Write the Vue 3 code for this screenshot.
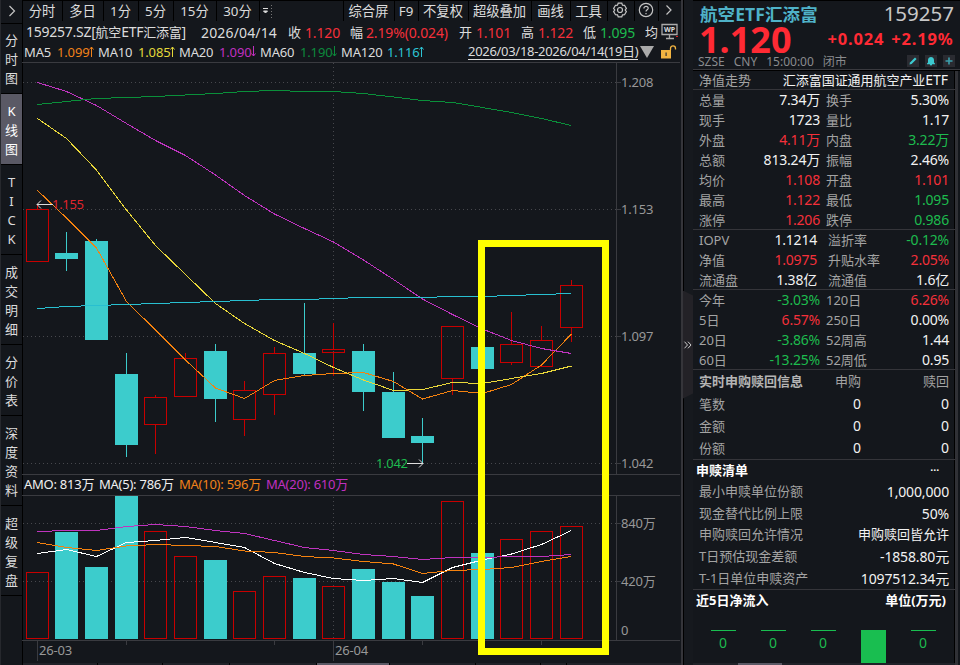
<template>
  <div class="terminal">
    <!-- Left navigation -->
    <aside class="side">
      <div class="side-toggle">
        <svg width="8" height="12" viewBox="0 0 8 12"><path d="M1.5 1l5 5-5 5" /></svg>
      </div>
      <div v-for="tab in sideTabs" :key="tab" class="side-tab" :class="{ active: tab === 'K线图' }">
        <span v-for="(ch, i) in tab" :key="i">{{ ch }}</span>
      </div>
      <div class="side-rest"></div>
    </aside>

    <!-- Chart area -->
    <main class="main">
      <div class="toolbar">
        <div v-for="item in periods" :key="item" class="tool">{{ item }}</div>
        <div class="tool more">
          <svg width="12" height="14" viewBox="0 0 12 14">
            <path d="M1 4.500h5M1.500 7h4L3.500 9z" fill="#ddd" stroke="#ddd" />
            <path d="M9.500 1v13" stroke="#777" stroke-dasharray="1 2" />
          </svg>
        </div>
        <div v-for="item in tools" :key="item" class="tool">{{ item }}</div>
        <div class="tool icon">
          <svg width="16" height="16" viewBox="0 0 16 16">
            <path d="M6.200 1.200h3.600l.7 1.900 2 .2 1.900 3.100-1.200 1.600 1.200 1.600-1.900 3.100-2 .2-.7 1.900H6.200l-.7-1.900-2-.2-1.900-3.100L2.800 8 1.600 6.400l1.900-3.100 2-.2z" />
            <circle cx="8" cy="8" r="2.500" />
          </svg>
        </div>
        <div class="tool icon">
          <svg width="16" height="16" viewBox="0 0 16 16">
            <circle cx="8" cy="8" r="6.700" />
            <path d="M5.900 6.400c0-2.700 4.300-2.600 4.300-.1 0 1.500-2.200 1.600-2.200 3.300M8 10.900v1.300" />
          </svg>
        </div>
        <div class="tool icon">
          <svg width="8" height="12" viewBox="0 0 8 12"><path d="M1.500 1.500L6 6l-4.500 4.500" /></svg>
        </div>
      </div>

      <div class="quote-row">
        <span>159257.SZ[<i>航空</i>ETF<i>汇添富</i>]</span>
        <span class="date">2026/04/14</span>
        <template v-for="q in quotes" :key="q.label">
          <i>{{ q.label }}</i>
          <span :class="q.tone">{{ q.value }}</span>
        </template>
        <i>均</i>
        <svg class="wp" width="18" height="17" viewBox="0 0 18 17">
          <path d="M1 1.500h15v10H1zM5 15.500h8M8.500 12v3" fill="none" stroke="#aaa" stroke-width="1.300" />
          <text x="8.500" y="9" text-anchor="middle">WP</text>
          <path d="M15 13.500h2" stroke="#e02020" />
        </svg>
      </div>

      <div class="ma-row">
        <template v-for="m in averages" :key="m.name">
          <span>{{ m.name }}</span>
          <span :class="m.tone">{{ m.value }}<svg width="5" height="11" viewBox="0 0 5 11"><path :d="m.up ? 'M2.500 11V1M.5 3.500l2-2.500 2 2.500' : 'M2.500 0v10M.5 7.500l2 2.500 2-2.500'" /></svg></span>
        </template>
        <span class="range">2026/03/18-2026/04/14(19<i>日</i>)</span>
        <svg class="tri" width="14" height="12" viewBox="0 0 14 12"><path d="M0 0h14L7 12z" fill="#aaa" /></svg>
        <svg class="lock" width="16" height="14" viewBox="0 0 16 14">
          <path d="M0 5h10v8.500H0z" fill="#f2b441" />
          <path d="M9.500 5V3.500c0-3.500 5-3.500 5 0v1" fill="none" stroke="#f2b441" stroke-width="1.300" />
          <path d="M4.500 7.500h1.200v3.500H4.500z" fill="#333" />
        </svg>
      </div>

      <div class="chart-wrap">
        <svg class="chart" width="658" height="600" viewBox="22 62 658 600">
          <g class="frame">
            <path d="M22 62.500H680M22 474.500H680M22 495.500H680M22 640.500H680" />
            <path d="M616.500 63V474M616.500 496V640M617 82.500h4M617 209.500h4M617 336.500h4M617 463.500h4M617 523.500h4M617 581.500h4" />
            <path d="M37.500 641V661M333.500 641V661M126.500 641v4M274.500 641v4M422.500 641v4M541.500 641v4" />
          </g>
          <path class="dots" d="M23 82.500H616M23 209.500H616M23 336.500H616M23 463.500H616M23 523.500H616M23 581.500H616M333.500 63V474M333.500 497V640" />

          <g v-for="(c, i) in candles" :key="i" :class="c[0] ? 'rise' : 'fall'">
            <path :d="`M${xs[i]} ${c[3]}V${c[1]}M${xs[i]} ${c[2]}V${c[4]}`" />
            <rect :x="xs[i] - 11" :y="c[1] + 0.5" width="22" :height="c[2] - c[1] - 1" />
            <rect :x="xs[i] - 11" :y="c[5] + 0.5" width="22" :height="638 - c[5]" />
          </g>

          <polyline v-for="(l, i) in lines" :key="i" class="ma" :class="l.tone" :points="toPoints(l.ys)" />

          <g class="mark">
            <path d="M37 204.500H53M41 200.500l-4 4 4 4M407 463.500h16M419 459.500l4 4-4 4" />
            <text class="c-red" x="52" y="209">1.155</text>
            <text class="c-green" x="376" y="468">1.042</text>
          </g>
          <g class="axis">
            <text v-for="a in axis" :key="a[0]" :x="a[1]" :y="a[2]">{{ a[0] }}</text>
          </g>
          <rect class="highlight" x="481.500" y="243.500" width="124" height="408" />
        </svg>
        <div class="amo-row">
          <span>AMO: 813<i>万</i></span>
          <span>MA(5): 786<i>万</i></span>
          <span class="c-orange">MA(10): 596<i>万</i></span>
          <span class="c-magenta">MA(20): 610<i>万</i></span>
        </div>
      </div>
      <div class="strip"><b v-for="(w, i) in [74, 64, 66, 86, 72, 85, 64, 25, 115]" :key="i" :class="{ on: i === 4 }" :style="{ width: w + 'px' }"></b></div>
    </main>

    <!-- Collapse gutter -->
    <div class="gutter">
      <div class="handle">
        <svg width="9" height="8" viewBox="0 0 9 8"><path d="M1.500 .7l3 3.300-3 3.300M5 .7l3 3.300-3 3.300" /></svg>
      </div>
    </div>

    <!-- Quote panel -->
    <section class="panel">
      <header class="head">
        <div class="head-name">
          <strong>航空ETF汇添富</strong>
          <span>159257</span>
        </div>
        <div class="head-price">
          <strong>1.120</strong>
          <b>+0.024</b>
          <b>+2.19%</b>
        </div>
        <div class="head-meta">
          <span>SZSE</span><span>CNY</span><span>15:00:00</span><i>闭市</i>
          <div class="badges">
            <svg width="12" height="12" viewBox="0 0 12 12"><path d="M2.500 9.500l.5-2L8 2.500 9.600 4l-5 5z" fill="#3ccad0" /></svg>
            <svg width="12" height="12" viewBox="0 0 12 12"><path d="M2 9.200V8.500l1-1V5c0-4 6-4 6 0v2.500l1 1v.7H7.200a1.200 1.200 0 01-2.400 0z" fill="#3ccad0" /></svg>
            <svg width="12" height="12" viewBox="0 0 12 12"><path d="M6 2.500v7M2.500 6h7" stroke="#3ba0ad" stroke-width="1.600" /></svg>
          </div>
        </div>
      </header>

      <div class="body">
        <div class="row trend">
          <i>净值走势</i>
          <span class="white"><i>汇添富国证通用航空产业</i>ETF</span>
        </div>
        <div v-for="(group, g) in groups" :key="g" class="group" :class="'group-' + g">
          <div v-for="r in group" :key="r[0]" class="pair">
            <i>{{ r[0] }}</i>
            <span :class="r[2]">{{ r[1] }}</span>
            <i>{{ r[3] }}</i>
            <span :class="r[5]">{{ r[4] }}</span>
          </div>
        </div>

        <div class="group live">
          <div class="live-row live-head"><b>实时申购赎回信息</b><i>申购</i><i>赎回</i></div>
          <div v-for="n in ['笔数', '金额', '份额']" :key="n" class="live-row">
            <i>{{ n }}</i><span>0</span><span>0</span>
          </div>
        </div>

        <div class="group list">
          <div class="list-head"><b>申赎清单</b><em>···</em></div>
          <div v-for="r in listing" :key="r[0]" class="row">
            <i>{{ r[0] }}</i>
            <span class="white" :class="{ cjk: r[2] }">{{ r[1] }}</span>
          </div>
        </div>

        <div class="flow-head"><b>近5日净流入</b><b>单位(万元)</b></div>
        <div class="flow">
          <div v-for="(f, i) in flows" :key="i" class="flow-bar">
            <div :style="{ height: f + 'px' }"></div>
            <span v-if="f === 1">0</span>
          </div>
        </div>
        <div class="panel-strip"><b></b></div>
      </div>
    </section>
  </div>
</template>

<script setup>
const sideTabs = ['分时图', 'K线图', 'TICK', '成交明细', '分价表', '深度资料', '超级复盘']
const periods = ['分时', '多日', '1分', '5分', '15分', '30分']
const tools = ['综合屏', 'F9', '不复权', '超级叠加', '画线', '工具']

const quotes = [
  { label: '收', value: '1.120', tone: 'c-red' },
  { label: '幅', value: '2.19%(0.024)', tone: 'c-red' },
  { label: '开', value: '1.101', tone: 'c-red' },
  { label: '高', value: '1.122', tone: 'c-red' },
  { label: '低', value: '1.095', tone: 'c-green' }
]

const averages = [
  { name: 'MA5', value: '1.099', tone: 'c-orange', up: true },
  { name: 'MA10', value: '1.085', tone: 'c-yellow', up: true },
  { name: 'MA20', value: '1.090', tone: 'c-magenta', up: false },
  { name: 'MA60', value: '1.190', tone: 'c-dkgreen', up: false },
  { name: 'MA120', value: '1.116', tone: 'c-cyan', up: true }
]

// Candle centres
const xs = [37.5, 66.5, 96.5, 126.5, 155.5, 185.5, 215.5, 244.5, 274.5, 304.5, 333.5, 363.5, 393.5, 422.5, 452.5, 482.5, 511.5, 541.5, 571.5]

// [rise, body top, body bottom, high, low, volume top]
const candles = [
  [1, 209, 262, 205, 262, 572],
  [0, 253, 259, 232, 271, 532],
  [0, 241, 340, 239, 340, 567],
  [0, 374, 445, 353, 457, 496],
  [1, 397, 425, 395, 454, 531],
  [1, 358, 397, 353, 397, 556],
  [0, 351, 399, 344, 422, 560],
  [1, 390, 420, 381, 436, 591],
  [1, 353, 395, 347, 415, 576],
  [0, 353, 374, 303, 375, 578],
  [1, 349, 353, 323, 376, 586],
  [0, 351, 392, 344, 411, 569],
  [0, 392, 438, 372, 438, 582],
  [0, 436, 443, 418, 464, 596],
  [1, 326, 379, 326, 395, 501],
  [0, 347, 369, 347, 369, 553],
  [1, 344, 363, 312, 365, 539],
  [1, 340, 367, 326, 367, 531],
  [1, 285, 328, 280, 342, 526]
]

const lines = [
  { tone: 's-orange', ys: [190.5, 218, 248, 301.5, 330, 360, 388, 398.5, 380.5, 375.5, 373.5, 372.5, 381.5, 399, 390.5, 393.5, 384.5, 365, 334] },
  { tone: 's-yellow', ys: [118.5, 138.5, 170, 210, 245.5, 274.5, 303.5, 323.5, 340.5, 353.5, 367.5, 380, 390.5, 389.5, 382.5, 383.5, 378.5, 373.5, 366] },
  { tone: 's-magenta', ys: [82.5, 91.5, 105.5, 123.5, 140.5, 155.5, 175, 195.5, 214, 228.5, 242, 260, 279.5, 299, 314.5, 329, 340.5, 348.5, 353.5] },
  { tone: 's-green', ys: [104.5, 101.5, 98.5, 97.5, 96.5, 95, 93.5, 91.5, 90.5, 91.5, 91.5, 93.5, 97, 100.5, 102.5, 107.5, 112.5, 118.5, 125.5] },
  { tone: 's-cyan', ys: [308.5, 306.5, 305.5, 304.5, 303.5, 302.5, 301.5, 300.5, 299.5, 299.5, 298.5, 297.5, 297.5, 297.5, 296.5, 296.5, 295.5, 294.5, 293.5] },
  { tone: 's-white', ys: [553.5, 549.5, 556.5, 542.5, 540.5, 537.5, 542.5, 547.5, 563.5, 572.5, 578.5, 580.5, 578.5, 582.5, 567.5, 560, 554, 544.5, 530.5] },
  { tone: 's-orange', ys: [542.5, 547.5, 550.5, 546, 544.5, 545.5, 546.5, 551, 552.5, 556.5, 558, 561.5, 564, 573.5, 570.5, 569.5, 567.5, 561.5, 556.5] },
  { tone: 's-magenta', ys: [531.5, 530.5, 530.5, 526.5, 524.5, 526.5, 530.5, 533.5, 540.5, 547.5, 550.5, 554.5, 556.5, 559.5, 557.5, 557.5, 556.5, 556.5, 554.5] }
]

const axis = [
  ['1.208', 621, 87],
  ['1.153', 621, 214],
  ['1.097', 621, 341],
  ['1.042', 621, 468],
  ['840万', 621, 528],
  ['420万', 621, 586],
  ['0', 621, 635],
  ['26-03', 39, 655],
  ['26-04', 335, 655]
]

const groups = [
  [
    ['总量', '7.34万', 'white', '换手', '5.30%', 'white'],
    ['现手', '1723', 'white', '量比', '1.17', 'white'],
    ['外盘', '4.11万', 'c-red', '内盘', '3.22万', 'c-green'],
    ['总额', '813.24万', 'white', '振幅', '2.46%', 'white'],
    ['均价', '1.108', 'c-red', '开盘', '1.101', 'c-red'],
    ['最高', '1.122', 'c-red', '最低', '1.095', 'c-green'],
    ['涨停', '1.206', 'c-red', '跌停', '0.986', 'c-green']
  ],
  [
    ['IOPV', '1.1214', 'white', '溢折率', '-0.12%', 'c-green'],
    ['净值', '1.0975', 'c-red', '升贴水率', '2.05%', 'c-red'],
    ['流通盘', '1.38亿', 'white', '流通值', '1.6亿', 'white']
  ],
  [
    ['今年', '-3.03%', 'c-green', '120日', '6.26%', 'c-red'],
    ['5日', '6.57%', 'c-red', '250日', '0.00%', 'white'],
    ['20日', '-3.86%', 'c-green', '52周高', '1.44', 'white'],
    ['60日', '-13.25%', 'c-green', '52周低', '0.95', 'white']
  ]
]

const listing = [
  ['最小申赎单位份额', '1,000,000'],
  ['现金替代比例上限', '50%'],
  ['申购赎回允许情况', '申购赎回皆允许', true],
  ['T日预估现金差额', '-1858.80元'],
  ['T-1日单位申赎资产', '1097512.34元']
]

const flows = [1, 1, 1, 33, 1]

function toPoints(ys) {
  return ys.map((y, i) => `${xs[i]},${y}`).join(' ')
}
</script>

<style>
body {
  background: #000;
  overflow: hidden;
}
</style>

<style scoped>
.terminal {
  display: flex;
  width: 960px;
  height: 665px;
  overflow: hidden;
  background: #14171c;
  color: #dcdcdc;
  font-family: "Noto Sans", "Noto Sans CJK SC", sans-serif;
  font-size: 14px;
  line-height: 20px;
  white-space: nowrap;
}

.terminal * {
  box-sizing: border-box;
}

i,
em {
  font-style: normal;
}

i {
  font-size: 13px;
}

svg {
  display: block;
  flex: none;
}

.white { color: #f2f2f2; }
.c-red { color: #f5303a; fill: #e0242c; }
.c-green { color: #1dbb4e; fill: #1dbb4e; }
.c-orange { color: #f0821a; }
.c-yellow { color: #e3d83a; }
.c-magenta { color: #c030c0; }
.c-dkgreen { color: #0c8a3c; }
.c-cyan { color: #2cc4d4; }

/* Left navigation */
.side {
  display: flex;
  flex-direction: column;
  width: 22px;
  border-left: 1px solid #26282d;
}

.side-toggle {
  display: flex;
  align-items: center;
  justify-content: center;
  height: 24px;
  padding-bottom: 2px;
  border-bottom: 1px solid #000;
}

.side-toggle path,
.tool.icon path,
.tool.icon circle {
  fill: none;
  stroke: #c4c4c4;
  stroke-width: 1.2;
}

.side-tab {
  display: flex;
  flex-direction: column;
  align-items: center;
  padding: 7px 0 5px;
  border-bottom: 1px solid #000;
  font-size: 13px;
  line-height: 19px;
}

.side-tab:nth-child(n + 3) {
  padding: 8px 0 5px;
}

.side-tab.active {
  background: #5a5965;
  color: #fff;
}

/* Toolbar */
.main {
  display: flex;
  flex-direction: column;
  width: 659px;
  border-left: 1px solid #000;
}

.toolbar {
  display: grid;
  grid-template-columns: 40px 41px 35px 35px 43px 43px 84px 51px 24px 50px 63px 39px 37px 27px 24px 22px;
  height: 21px;
  border-top: 1px solid #000;
}

.tool {
  display: flex;
  align-items: center;
  justify-content: center;
  padding-right: 1px;
  border-right: 1px solid #000;
  font-size: 13.3px;
  line-height: 20px;
}

.tool.more {
  justify-content: flex-start;
  padding-left: 2px;
}

.tool.icon {
  padding-right: 2px;
  padding-bottom: 2px;
}

.tool:last-child {
  border-right: 0;
}

.quote-row {
  display: grid;
  grid-template-columns: 175px 87px 17px 45px 16px 93px 17px 45px 17px 45px 17px 45px 16px 18px;
  align-items: center;
  height: 21px;
  padding-left: 3px;
  line-height: 21px;
}

.quote-row > span {
  letter-spacing: -0.25px;
}

.quote-row > .date {
  letter-spacing: 0.15px;
}

.quote-row > [class^="c-"] {
  letter-spacing: -0.15px;
}

.wp {
  margin-top: -2px;
}

.wp text {
  fill: #ddd;
  font-size: 7px;
  font-weight: 700;
}

.ma-row {
  display: grid;
  grid-template-columns: 33px 41px 40px 41px 40px 41px 40px 41px 46px 81px 172px 21px 16px;
  align-items: center;
  height: 20px;
  padding-left: 1px;
  font-size: 13px;
  line-height: 20px;
}

.ma-row span svg {
  display: inline-block;
  fill: none;
  stroke: currentColor;
}

.ma-row > span {
  letter-spacing: -0.15px;
}

.ma-row > .range {
  justify-self: start;
  line-height: 15px;
  letter-spacing: -0.3px;
  border-bottom: 1px solid #dcdcdc;
}

/* Chart */
.chart-wrap {
  position: relative;
  height: 601px;
}

.chart {
  margin-left: -1px;
}

.frame path {
  fill: none;
  stroke: #3a3b40;
}

.dots {
  fill: none;
  stroke: #47484d;
  stroke-dasharray: 1 3;
  shape-rendering: crispEdges;
}

.rise path,
.rise rect {
  fill: none;
  stroke: #c80000;
}

.fall path {
  stroke: #3ccccc;
}

.fall rect {
  fill: #3ccccc;
  stroke: #3ccccc;
}

.ma {
  fill: none;
  stroke-width: 1;
  shape-rendering: crispEdges;
}

.s-orange { stroke: #f5820f; }
.s-yellow { stroke: #ead83a; }
.s-magenta { stroke: #bf34bf; }
.s-green { stroke: #0a8f3a; }
.s-cyan { stroke: #28bfd0; }
.s-white { stroke: #fff; }

.mark path {
  fill: none;
  stroke: #ddd;
}

.mark text {
  font-size: 13px;
  letter-spacing: -0.3px;
}

.axis text {
  fill: #989898;
  font-size: 13px;
  letter-spacing: -0.2px;
}

.highlight {
  fill: none;
  stroke: #ff0;
  stroke-width: 7;
}

.amo-row {
  position: absolute;
  top: 412px;
  left: 1px;
  display: grid;
  grid-template-columns: 75px 80px 87px 90px;
  height: 20px;
  color: #f0f0f0;
  font-size: 13px;
  letter-spacing: -0.25px;
}

.strip {
  display: flex;
  gap: 1px;
  height: 2px;
  background: #000;
}

.strip b {
  flex: none;
  background: #202228;
}

.strip b.on {
  background: #5a5965;
}

/* Collapse gutter */
.gutter {
  display: flex;
  align-items: center;
  width: 12px;
  padding-top: 24px;
  background: linear-gradient(90deg, #35353a 2px, #000 2px, #000 3px, #16191e 3px);
}

.handle {
  display: flex;
  align-items: center;
  width: 10px;
  height: 108px;
  margin-left: 2px;
  background: #232227;
  clip-path: polygon(0 0, 100% 5px, 100% 103px, 0 100%);
}

.handle path {
  fill: none;
  stroke: #ccc;
}

/* Quote panel */
.panel {
  width: 267px;
  border-top: 1px solid #000;
}

.head {
  height: 70px;
  padding: 2px 6px 0 7px;
  border-bottom: 1px solid #000;
  box-shadow: inset 0 -1px #3a3a3f;
}

.head-name {
  display: flex;
  justify-content: space-between;
  height: 22px;
  line-height: 22px;
}

.head-name strong {
  color: #4fb2c8;
  font-size: 17.5px;
  letter-spacing: 0.1px;
}

.head-name span {
  color: #c8c8c8;
  font-size: 20.5px;
  line-height: 20px;
}

.head-price {
  display: flex;
  align-items: center;
  height: 29px;
  color: #ff2a34;
  font-size: 16.5px;
}

.head-price strong {
  width: 132px;
  margin-left: -1px;
  font-size: 36px;
  line-height: 29px;
}

.head-price b {
  width: 66px;
  padding-left: 1px;
  padding-bottom: 1px;
  letter-spacing: 0.85px;
}

.head-meta {
  display: flex;
  gap: 9px;
  height: 14px;
  margin: 1px 0 0 -2px;
  color: #8a8b8e;
  font-size: 12px;
  line-height: 14px;
}

.head-meta i {
  font-size: 12px;
}

.badges {
  display: flex;
  gap: 6px;
  margin: 0 -1px 0 auto;
}

.badges svg {
  background: #2a2b31;
}

.body {
  height: 594px;
  margin-right: 2px;
  border-right: 3px solid #303136;
  box-shadow: inset -1px 0 #000;
}

.body i {
  color: #a3a3a3;
}

.body .white i {
  color: #f2f2f2;
}

.row {
  display: flex;
  justify-content: space-between;
  padding: 0 6px;
}

.body .trend {
  height: 19px;
  padding-right: 7px;
  border-bottom: 1px solid #35353a;
  line-height: 18px;
}

.trend span {
  letter-spacing: -0.05px;
}

.group {
  border-bottom: 1px solid #35353a;
}

.group-0 { height: 140px; }
.group-1 { height: 60px; }
.group-2 { height: 80px; }

.pair {
  display: grid;
  grid-template-columns: 50px 71px 59px 63px;
  height: 20px;
  padding-left: 6px;
}

.pair > i:nth-child(3) {
  padding-left: 6px;
}

.pair > span {
  justify-self: end;
  letter-spacing: -0.2px;
}

.pair > span:last-child {
  margin-right: -7px;
}

.group-1 .pair > span:nth-child(2) {
  margin-right: 3px;
}

.group-1 .pair > i:nth-child(3) {
  padding-left: 8px;
}

.live {
  height: 90px;
}

.live-row {
  display: grid;
  grid-template-columns: 112px 50px 88px;
  height: 22px;
  padding-left: 6px;
  line-height: 22px;
}

.live-head {
  height: 22.5px;
}

.live-row b {
  color: #b4b4b4;
  font-size: 13px;
}

.live-row :nth-child(n + 2) {
  justify-self: end;
  color: #f2f2f2;
}

.live-row i:nth-child(n + 2) {
  color: #a3a3a3;
}

.list {
  height: 130px;
}

.list .row {
  height: 21.7px;
  line-height: 21.5px;
}

.list .row span {
  letter-spacing: -0.15px;
}

.list .row .cjk {
  font-size: 13px;
  letter-spacing: 0;
}

.list-head,
.flow-head {
  display: flex;
  justify-content: space-between;
  height: 21px;
  padding: 0 9px 0 3px;
  color: #fff;
  font-size: 13px;
  line-height: 21px;
}

.list-head em {
  padding-right: 7px;
  letter-spacing: -0.5px;
}

.flow {
  display: flex;
  gap: 25px;
  height: 33px;
  margin-top: 19px;
  padding-left: 18px;
}

.flow-bar {
  display: flex;
  flex-direction: column;
  align-items: center;
  width: 25px;
  padding-right: 1px;
  color: #1dbb4e;
  font-size: 14px;
  line-height: 24px;
}

.flow-bar div {
  flex: none;
  width: 25px;
  margin-right: -1px;
  background: #19be50;
}

.panel-strip {
  height: 2px;
  padding-left: 45px;
  background: #202228;
}

.panel-strip b {
  display: block;
  width: 44px;
  height: 2px;
  background: #5a5965;
}
</style>
